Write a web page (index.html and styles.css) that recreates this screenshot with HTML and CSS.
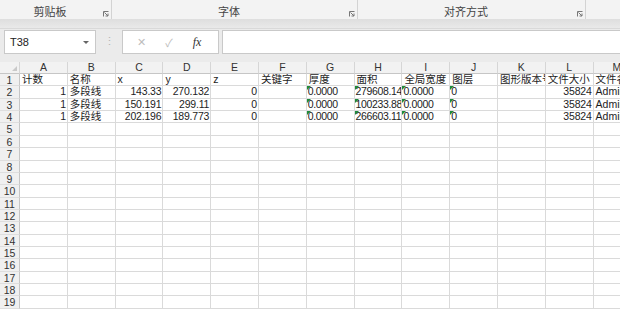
FILE: index.html
```html
<!DOCTYPE html>
<html lang="zh">
<head>
    <meta charset="UTF-8">
    <title>工作表</title>
    <link rel="stylesheet" href="styles.css">
</head>
<body>
    <div class="ribbon">
        <div class="group g1"><span class="group-label">剪贴板</span><span class="launcher"><svg width="6" height="6" viewBox="0 0 6 6"><path d="M0.5 5.5V0.5H5.5M1.5 1.5L5 5M5 2.5V5H2.5" fill="none" stroke="#777" stroke-width="1"/></svg></span></div>
        <div class="group g2"><span class="group-label">字体</span><span class="launcher"><svg width="6" height="6" viewBox="0 0 6 6"><path d="M0.5 5.5V0.5H5.5M1.5 1.5L5 5M5 2.5V5H2.5" fill="none" stroke="#777" stroke-width="1"/></svg></span></div>
        <div class="group g3"><span class="group-label">对齐方式</span><span class="launcher"><svg width="6" height="6" viewBox="0 0 6 6"><path d="M0.5 5.5V0.5H5.5M1.5 1.5L5 5M5 2.5V5H2.5" fill="none" stroke="#777" stroke-width="1"/></svg></span></div>
        <div class="group g4"></div>
    </div>
    <div class="band"></div>
    <div class="formula-bar">
        <div class="name-box"><span>T38</span><span class="drop"></span></div>
        <div class="dots">⋮</div>
        <div class="fx-box">
            <span class="fx-btn cancel">✕</span>
            <span class="fx-btn ok">✓</span>
            <span class="fx-btn fx">fx</span>
        </div>
        <div class="formula-input"></div>
    </div>

    <div class="sheet">
        <div class="corner"></div><div class="ch">A</div><div class="ch">B</div><div class="ch">C</div><div class="ch">D</div><div class="ch">E</div><div class="ch">F</div><div class="ch">G</div><div class="ch">H</div><div class="ch">I</div><div class="ch">J</div><div class="ch">K</div><div class="ch">L</div><div class="ch">M</div>

        <div class="rh">1</div><div class="c">计数</div><div class="c">名称</div><div class="c">x</div><div class="c">y</div><div class="c">z</div><div class="c">关键字</div><div class="c">厚度</div><div class="c">面积</div><div class="c">全局宽度</div><div class="c">图层</div><div class="c">图形版本号</div><div class="c">文件大小</div><div class="c">文件名</div>

        <div class="rh">2</div><div class="c num">1</div><div class="c">多段线</div><div class="c num">143.33</div><div class="c num">270.132</div><div class="c num">0</div><div class="c"></div><div class="c flag">0.0000</div><div class="c flag">279608.14</div><div class="c flag">0.0000</div><div class="c flag">0</div><div class="c"></div><div class="c num">35824</div><div class="c">Administrator</div>

        <div class="rh">3</div><div class="c num">1</div><div class="c">多段线</div><div class="c num">150.191</div><div class="c num">299.11</div><div class="c num">0</div><div class="c"></div><div class="c flag">0.0000</div><div class="c flag">100233.88</div><div class="c flag">0.0000</div><div class="c flag">0</div><div class="c"></div><div class="c num">35824</div><div class="c">Administrator</div>

        <div class="rh">4</div><div class="c num">1</div><div class="c">多段线</div><div class="c num">202.196</div><div class="c num">189.773</div><div class="c num">0</div><div class="c"></div><div class="c flag">0.0000</div><div class="c flag">266603.11</div><div class="c flag">0.0000</div><div class="c flag">0</div><div class="c"></div><div class="c num">35824</div><div class="c">Administrator</div>

        <div class="rh">5</div><div class="c"></div><div class="c"></div><div class="c"></div><div class="c"></div><div class="c"></div><div class="c"></div><div class="c"></div><div class="c"></div><div class="c"></div><div class="c"></div><div class="c"></div><div class="c"></div><div class="c"></div>
        <div class="rh">6</div><div class="c"></div><div class="c"></div><div class="c"></div><div class="c"></div><div class="c"></div><div class="c"></div><div class="c"></div><div class="c"></div><div class="c"></div><div class="c"></div><div class="c"></div><div class="c"></div><div class="c"></div>
        <div class="rh">7</div><div class="c"></div><div class="c"></div><div class="c"></div><div class="c"></div><div class="c"></div><div class="c"></div><div class="c"></div><div class="c"></div><div class="c"></div><div class="c"></div><div class="c"></div><div class="c"></div><div class="c"></div>
        <div class="rh">8</div><div class="c"></div><div class="c"></div><div class="c"></div><div class="c"></div><div class="c"></div><div class="c"></div><div class="c"></div><div class="c"></div><div class="c"></div><div class="c"></div><div class="c"></div><div class="c"></div><div class="c"></div>
        <div class="rh">9</div><div class="c"></div><div class="c"></div><div class="c"></div><div class="c"></div><div class="c"></div><div class="c"></div><div class="c"></div><div class="c"></div><div class="c"></div><div class="c"></div><div class="c"></div><div class="c"></div><div class="c"></div>
        <div class="rh">10</div><div class="c"></div><div class="c"></div><div class="c"></div><div class="c"></div><div class="c"></div><div class="c"></div><div class="c"></div><div class="c"></div><div class="c"></div><div class="c"></div><div class="c"></div><div class="c"></div><div class="c"></div>
        <div class="rh">11</div><div class="c"></div><div class="c"></div><div class="c"></div><div class="c"></div><div class="c"></div><div class="c"></div><div class="c"></div><div class="c"></div><div class="c"></div><div class="c"></div><div class="c"></div><div class="c"></div><div class="c"></div>
        <div class="rh">12</div><div class="c"></div><div class="c"></div><div class="c"></div><div class="c"></div><div class="c"></div><div class="c"></div><div class="c"></div><div class="c"></div><div class="c"></div><div class="c"></div><div class="c"></div><div class="c"></div><div class="c"></div>
        <div class="rh">13</div><div class="c"></div><div class="c"></div><div class="c"></div><div class="c"></div><div class="c"></div><div class="c"></div><div class="c"></div><div class="c"></div><div class="c"></div><div class="c"></div><div class="c"></div><div class="c"></div><div class="c"></div>
        <div class="rh">14</div><div class="c"></div><div class="c"></div><div class="c"></div><div class="c"></div><div class="c"></div><div class="c"></div><div class="c"></div><div class="c"></div><div class="c"></div><div class="c"></div><div class="c"></div><div class="c"></div><div class="c"></div>
        <div class="rh">15</div><div class="c"></div><div class="c"></div><div class="c"></div><div class="c"></div><div class="c"></div><div class="c"></div><div class="c"></div><div class="c"></div><div class="c"></div><div class="c"></div><div class="c"></div><div class="c"></div><div class="c"></div>
        <div class="rh">16</div><div class="c"></div><div class="c"></div><div class="c"></div><div class="c"></div><div class="c"></div><div class="c"></div><div class="c"></div><div class="c"></div><div class="c"></div><div class="c"></div><div class="c"></div><div class="c"></div><div class="c"></div>
        <div class="rh">17</div><div class="c"></div><div class="c"></div><div class="c"></div><div class="c"></div><div class="c"></div><div class="c"></div><div class="c"></div><div class="c"></div><div class="c"></div><div class="c"></div><div class="c"></div><div class="c"></div><div class="c"></div>
        <div class="rh">18</div><div class="c"></div><div class="c"></div><div class="c"></div><div class="c"></div><div class="c"></div><div class="c"></div><div class="c"></div><div class="c"></div><div class="c"></div><div class="c"></div><div class="c"></div><div class="c"></div><div class="c"></div>
        <div class="rh">19</div><div class="c"></div><div class="c"></div><div class="c"></div><div class="c"></div><div class="c"></div><div class="c"></div><div class="c"></div><div class="c"></div><div class="c"></div><div class="c"></div><div class="c"></div><div class="c"></div><div class="c"></div>
    </div>
</body>
</html>
```

FILE: styles.css
```css
*{
    box-sizing: border-box;
}
body{
    margin: 0;
    width: 620px;
    height: 309px;
    overflow: hidden;
    background-color: #ebebeb;
    font-family: "Liberation Sans", "Noto Sans CJK SC", sans-serif;
    color: #1d1d1d;
}

/* ribbon group labels */
.ribbon{
    display: flex;
    height: 19px;
    background-color: #f3f3f3;
}
.group{
    display: flex;
    align-items: flex-end;
    border-right: 1px solid #d3d3d3;
    padding-bottom: 1px;
}
.g1{ width: 112px; }
.g2{ width: 246px; }
.g3{ width: 228px; }
.g4{ flex: 1; border-right: none; }
.group-label{
    flex: 1;
    text-align: center;
    font-size: 11px;
    line-height: 12px;
    color: #444;
}
.launcher{
    width: 11px;
    height: 9px;
    display: flex;
    align-items: flex-end;
    padding-left: 3px;
    padding-bottom: 1px;
}
.band{
    height: 9px;
    background: linear-gradient(#dedede, #e9e9e9);
}

/* formula bar */
.formula-bar{
    display: flex;
    align-items: flex-start;
    height: 34px;
    padding-top: 1px;
    padding-left: 4px;
    border-top: 1px solid #d9d9d9;
}
.name-box{
    width: 92px;
    height: 24px;
    background-color: #fff;
    border: 1px solid #c9c9c9;
    display: flex;
    align-items: center;
    justify-content: space-between;
    padding: 0 6px 0 5px;
    font-size: 11px;
    color: #222;
}
.drop{
    width: 0;
    height: 0;
    border-left: 3px solid transparent;
    border-right: 3px solid transparent;
    border-top: 3px solid #666;
}
.dots{
    width: 26px;
    text-align: center;
    font-size: 11px;
    line-height: 22px;
    color: #b5b5b5;
}
.fx-box{
    width: 97px;
    height: 24px;
    background-color: #fff;
    border: 1px solid #c9c9c9;
    display: flex;
    align-items: center;
    padding-left: 11px;
    gap: 14px;
}
.fx-btn{
    width: 14px;
    text-align: center;
    font-size: 11px;
    color: #bdbdbd;
}
.fx{
    font-family: "Liberation Serif", serif;
    font-style: italic;
    font-size: 12px;
    color: #333;
}
.formula-input{
    flex: 1;
    height: 24px;
    margin-left: 3px;
    background-color: #fff;
    border: 1px solid #c9c9c9;
    border-right: none;
}

/* worksheet grid */
.sheet{
    display: grid;
    grid-template-columns: 20px repeat(13, 47.8px);
    grid-template-rows: 12px;
    grid-auto-rows: 12.37px;
    background-color: #fff;
    font-size: 10.5px;
    line-height: 11px;
}
.corner, .ch{
    background-color: #f2f2f2;
    border-right: 1px solid #d6d6d6;
    border-bottom: 1px solid #c6c6c6;
}
.corner{
    position: relative;
}
.corner::after{
    content: "";
    position: absolute;
    right: 2px;
    bottom: 2px;
    border-left: 5px solid transparent;
    border-bottom: 5px solid #c9c9c9;
}
.ch{
    text-align: center;
    color: #333;
}
.rh{
    background-color: #f0f0f0;
    border-right: 1px solid #c6c6c6;
    border-bottom: 1px solid #dedede;
    text-align: center;
    color: #333;
    line-height: 12px;
}
.c{
    position: relative;
    border-right: 1px solid #dadada;
    border-bottom: 1px solid #dadada;
    padding: 0 1px 0 2px;
    white-space: nowrap;
    overflow: hidden;
}
.num{
    text-align: right;
    letter-spacing: -0.2px;
}
.flag::before{
    content: "";
    position: absolute;
    left: 0;
    top: 0;
    border-top: 4px solid #1f8a3c;
    border-right: 4px solid transparent;
}
.flag{
    padding-left: 1px;
    letter-spacing: -0.35px;
}
```
